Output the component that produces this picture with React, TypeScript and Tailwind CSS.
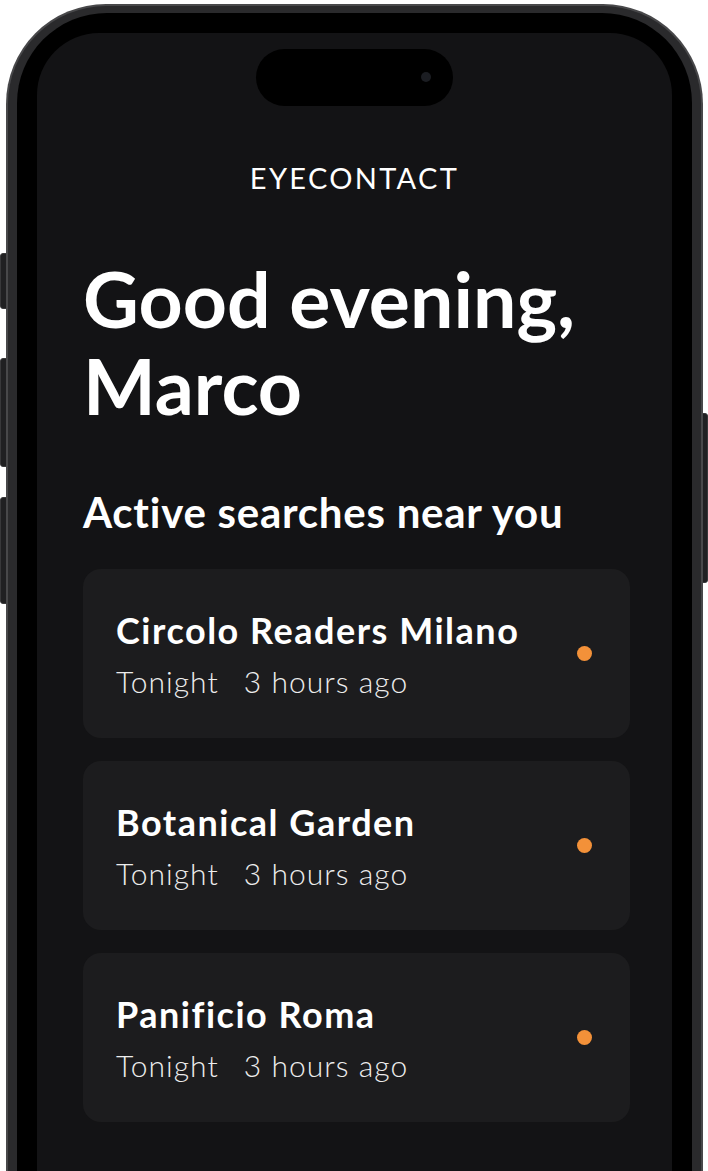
const searches = [
  { name: "Circolo Readers Milano", when: "Tonight", ago: "3 hours ago" },
  { name: "Botanical Garden", when: "Tonight", ago: "3 hours ago" },
  { name: "Panificio Roma", when: "Tonight", ago: "3 hours ago" },
];

const SearchCard = ({ name, when, ago }: { name: string; when: string; ago: string }) => {
  return (
    <div className="flex flex-row items-center justify-between h-[169px] rounded-[18px] bg-[#1c1c1e] pl-[33px] pr-[38px]">
      <div className="flex flex-col">
        <h3 className="text-[36px] leading-[36px] font-bold tracking-[0.042em] text-white">{name}</h3>
        <p className="flex flex-row gap-[25px] mt-[18px] text-[30px] leading-[30px] font-light tracking-[0.035em] text-[#ededed]">
          <span>{when}</span>
          <span>{ago}</span>
        </p>
      </div>
      <div className="w-[15px] h-[15px] rounded-full bg-[#f39139]" />
    </div>
  );
};

export default function App() {
  return (
    <div className="relative w-[708px] h-[1171px] overflow-hidden bg-white font-['Lato','Noto_Sans',sans-serif]">
      {/* hardware buttons */}
      <div className="absolute left-0 top-[253px] w-[8px] h-[56px] rounded-l-[3px] bg-[#202022] border border-[#38383a]" />
      <div className="absolute left-0 top-[358px] w-[8px] h-[109px] rounded-l-[3px] bg-[#202022] border border-[#38383a]" />
      <div className="absolute left-0 top-[497px] w-[8px] h-[107px] rounded-l-[3px] bg-[#202022] border border-[#38383a]" />
      <div className="absolute right-0 top-[413px] w-[8px] h-[170px] rounded-r-[3px] bg-[#202022] border border-[#38383a]" />

      {/* phone body */}
      <div className="relative ml-[6px] mt-[4px] w-[697px] h-[1300px] rounded-[100px] bg-[#48484a] p-[2px]">
        <div className="h-full rounded-[98px] bg-[#2a2a2c] pt-[7px] px-[9px]">
          <div className="h-full rounded-[90px] bg-black pt-[20px] px-[20px]">
            <div className="h-full rounded-[62px] bg-[#131315] flex flex-col pl-[46px] pr-[42px]">
              {/* dynamic island */}
              <div className="relative ml-[173px] mt-[16px] w-[197px] h-[57px] rounded-full bg-black">
                <div className="absolute right-[22px] top-[23px] w-[10px] h-[10px] rounded-full bg-[#1b1d22]" />
              </div>

              <div className="mt-[57px] -ml-[4px] text-center text-[29px] leading-[29px] tracking-[0.08em] text-white">
                EYECONTACT
              </div>

              <h1 className="mt-[63px] text-[77px] leading-[87px] font-bold text-white">
                Good evening,
                <br />
                Marco
              </h1>

              <h2 className="mt-[62px] text-[42px] leading-[42px] font-bold tracking-[0.018em] text-white">
                Active searches near you
              </h2>

              <div className="flex flex-col gap-[23px] mt-[36px]">
                {searches.map((s) => (
                  <SearchCard key={s.name} name={s.name} when={s.when} ago={s.ago} />
                ))}
              </div>
            </div>
          </div>
        </div>
      </div>
    </div>
  );
}
